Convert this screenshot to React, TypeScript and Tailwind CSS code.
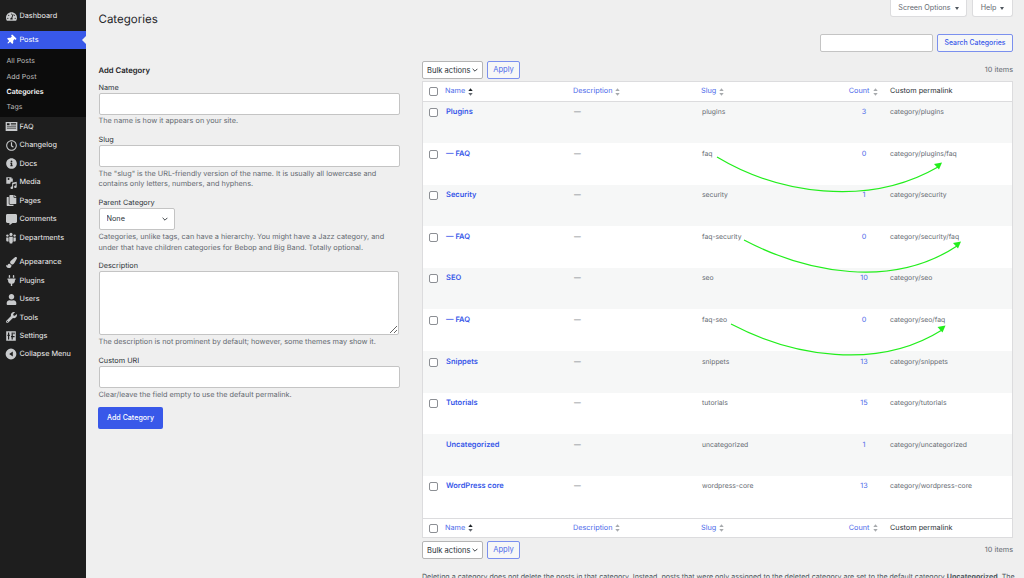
import type { ReactNode } from 'react';
import {
  FaTachometerAlt, FaThumbtack, FaRegClock, FaInfoCircle, FaCopy, FaCommentAlt,
  FaPaintBrush, FaPlug, FaUser, FaWrench,
} from 'react-icons/fa';

const font = { fontFamily: 'Inter, "Liberation Sans", sans-serif' };

function FaqIcon() {
  return (
    <svg viewBox="0 0 20 20" className="w-[13px] h-[13px]" fill="currentColor">
      <path d="M1 3h18v14H1z M3 5v3h4V5z M9 5v1h8V5z M9 7v1h8V7z M3 10v1h14v-1z M3 13v1h14v-1z" fillRule="evenodd" />
    </svg>
  );
}

function MediaIcon() {
  return (
    <svg viewBox="0 0 20 20" className="w-[13px] h-[13px]" fill="currentColor">
      <path d="M2 2h8v2h2v5H9l-1 3H2z M4 4.5a1.5 1.5 0 1 0 3 0a1.5 1.5 0 1 0-3 0z" fillRule="evenodd" />
      <path d="M18 9v7.5a2 2 0 1 1-1.5-1.9V11.5l-4 1v5.5a2 2 0 1 1-1.5-1.9V10.5z" />
    </svg>
  );
}

function GroupIcon() {
  return (
    <svg viewBox="0 0 20 20" className="w-[12px] h-[12px]" fill="currentColor">
      <circle cx="10" cy="4" r="2.6" />
      <circle cx="4" cy="6" r="2" />
      <circle cx="16" cy="6" r="2" />
      <path d="M7 8h6v8l-1 3H8l-1-3z" />
      <path d="M2 9h4v7H3l-1-2z" />
      <path d="M14 9h4v5l-1 2h-3z" />
    </svg>
  );
}

function SettingsIcon() {
  return (
    <svg viewBox="0 0 20 20" className="w-[12px] h-[12px]" fill="currentColor">
      <path d="M2 2h16v16H2z M5 4v4H4v2h1v6h2v-6h1V8H7V4z M11 4v6h-1v2h1v4h2v-4h3v-2h-3V4z M14 4v3h2V4z" fillRule="evenodd" />
    </svg>
  );
}

function CollapseIcon() {
  return (
    <svg viewBox="0 0 20 20" className="w-[12px] h-[12px]" fill="currentColor">
      <path d="M10 1a9 9 0 1 0 0 18a9 9 0 0 0 0-18z M13 6v8L7 10z" fillRule="evenodd" />
    </svg>
  );
}

function MenuItem({ icon, label, className = '' }: { icon: ReactNode; label: string; className?: string }) {
  return (
    <div className={`flex items-center h-[18.5px] pl-[3px] text-[#eeeeee] ${className}`}>
      <span className="w-[16.5px] flex justify-center text-[#c8cacc] text-[11px]">{icon}</span>
      <span className="pt-[1px]">{label}</span>
    </div>
  );
}

function Sidebar() {
  return (
    <aside className="w-[86px] shrink-0 h-full bg-[#1e1e1e] text-[7.3px] pt-[7px]">
      <MenuItem icon={<FaTachometerAlt />} label="Dashboard" />
      <div className="relative mt-[5.5px] flex items-center h-[18px] pl-[3px] bg-[#3858e9] text-white">
        <span className="w-[16.5px] flex justify-center text-[10px]"><FaThumbtack className="rotate-45" /></span>
        <span className="pt-[1px]">Posts</span>
        <span className="absolute right-0 top-[5px] w-0 h-0 border-y-[4px] border-y-transparent border-r-[4px] border-r-[#efefef]" />
      </div>
      <div className="bg-[#0c0c0c] h-[68px] pt-[5px] pl-[6.5px] text-[7px] text-[#bdbdbd]">
        <div className="h-[15.3px] flex items-center">All Posts</div>
        <div className="h-[15.3px] flex items-center">Add Post</div>
        <div className="h-[15.3px] flex items-center font-semibold text-white">Categories</div>
        <div className="h-[15.3px] flex items-center">Tags</div>
      </div>
      <div className="pt-[0.5px]">
        <MenuItem icon={<FaqIcon />} label="FAQ" />
        <MenuItem icon={<FaRegClock />} label="Changelog" />
        <MenuItem icon={<FaInfoCircle />} label="Docs" />
        <MenuItem icon={<MediaIcon />} label="Media" />
        <MenuItem icon={<FaCopy />} label="Pages" />
        <MenuItem icon={<FaCommentAlt />} label="Comments" />
        <MenuItem icon={<GroupIcon />} label="Departments" />
        <MenuItem icon={<FaPaintBrush />} label="Appearance" className="mt-[6px]" />
        <MenuItem icon={<FaPlug />} label="Plugins" />
        <MenuItem icon={<FaUser />} label="Users" />
        <MenuItem icon={<FaWrench />} label="Tools" />
        <MenuItem icon={<SettingsIcon />} label="Settings" />
        <MenuItem icon={<CollapseIcon />} label="Collapse Menu" className="-mt-[1px]" />
      </div>
    </aside>
  );
}

function Field({ label, help, children }: { label: string; help?: ReactNode; children: ReactNode }) {
  return (
    <div className="mb-[7px]">
      <div className="pt-[1px] text-[7.3px] leading-[10px] text-[#2c3338]">{label}</div>
      {children}
      {help && <p className="text-[7.3px] leading-[10.6px] text-[#646970] mt-[1.9px]">{help}</p>}
    </div>
  );
}

function TextInput() {
  return <input className="block w-[301px] h-[22px] bg-white border border-[#c4c4c4] rounded-[2px]" />;
}

function Chevron({ className }: { className: string }) {
  return (
    <svg viewBox="0 0 10 6" className={className} fill="none" stroke="#1d2327" strokeWidth="1.4">
      <path d="M1 1l4 4l4-4" />
    </svg>
  );
}

function AddForm() {
  return (
    <div className="w-[302px] shrink-0">
      <h1 className="text-[11.5px] leading-[16px] text-[#1d2327] mt-[11px]">Categories</h1>
      <h2 className="text-[7.7px] leading-[11px] font-semibold text-[#1d2327] mt-[37.5px] mb-[6px]">Add Category</h2>
      <Field label="Name" help="The name is how it appears on your site.">
        <TextInput />
      </Field>
      <Field
        label="Slug"
        help={'The "slug" is the URL-friendly version of the name. It is usually all lowercase and contains only letters, numbers, and hyphens.'}
      >
        <TextInput />
      </Field>
      <Field
        label="Parent Category"
        help="Categories, unlike tags, can have a hierarchy. You might have a Jazz category, and under that have children categories for Bebop and Big Band. Totally optional."
      >
        <div className="relative w-[76px] h-[22px]">
          <select className="block w-full h-full appearance-none bg-white border border-[#c4c4c4] rounded-[2px] pl-[7px] text-[7.3px] text-[#2c3338]">
            <option>None</option>
          </select>
          <Chevron className="absolute right-[7px] top-[9px] w-[6px] h-[4px]" />
        </div>
      </Field>
      <Field label="Description" help="The description is not prominent by default; however, some themes may show it.">
        <textarea className="block w-[300px] h-[64px] bg-white border border-[#c4c4c4] rounded-[2px]" />
      </Field>
      <Field label="Custom URI" help="Clear/leave the field empty to use the default permalink.">
        <TextInput />
      </Field>
      <button className="block w-[65px] h-[22px] -ml-[0.5px] bg-[#3858e9] rounded-[2px] text-white text-[7.1px] font-medium">Add Category</button>
    </div>
  );
}

function SortArrows({ active }: { active?: boolean }) {
  return (
    <svg viewBox="0 0 8 12" className="w-[5px] h-[8px] ml-[3px]">
      <path d="M4 0l3.5 4.5h-7z" fill={active ? '#1d2327' : '#a7aaad'} />
      <path d="M4 12l3.5-4.5h-7z" fill={active ? '#646970' : '#a7aaad'} />
    </svg>
  );
}

function Checkbox() {
  return <span className="block w-[9px] h-[9px] bg-white border border-[#8c8f94] rounded-[2px]" />;
}

function HeaderRow({ border }: { border: string }) {
  return (
    <div className={`flex items-center h-[19.5px] pt-[1px] bg-white ${border} text-[7.3px] text-[#4e6bea]`}>
      <span className="w-[22px] pl-[6px]"><Checkbox /></span>
      <span className="w-[128px] flex items-center">Name<SortArrows active /></span>
      <span className="w-[128px] flex items-center">Description<SortArrows /></span>
      <span className="w-[129px] flex items-center">Slug<SortArrows /></span>
      <span className="w-[60px] flex items-center justify-end pr-[12.5px]">Count<SortArrows /></span>
      <span className="text-[#2c3338]">Custom permalink</span>
    </div>
  );
}

const rows = [
  { name: 'Plugins', slug: 'plugins', count: '3', uri: 'category/plugins' },
  { name: '— FAQ', slug: 'faq', count: '0', uri: 'category/plugins/faq' },
  { name: 'Security', slug: 'security', count: '1', uri: 'category/security' },
  { name: '— FAQ', slug: 'faq-security', count: '0', uri: 'category/security/faq' },
  { name: 'SEO', slug: 'seo', count: '10', uri: 'category/seo' },
  { name: '— FAQ', slug: 'faq-seo', count: '0', uri: 'category/seo/faq' },
  { name: 'Snippets', slug: 'snippets', count: '13', uri: 'category/snippets' },
  { name: 'Tutorials', slug: 'tutorials', count: '15', uri: 'category/tutorials' },
  { name: 'Uncategorized', slug: 'uncategorized', count: '1', uri: 'category/uncategorized', locked: true },
  { name: 'WordPress core', slug: 'wordpress-core', count: '13', uri: 'category/wordpress-core' },
];

function Arrows() {
  return (
    <svg viewBox="1 1 591 457" className="absolute inset-0 w-[591px] h-[457px] pointer-events-none" fill="none">
      <g stroke="#22ee1c" strokeWidth="1.2">
        <path d="M295 76C355 112 445 127 516 86" />
        <path d="M322 159C385 192 470 208 535 165" />
        <path d="M309 243C370 275 455 290 520 249" />
      </g>
      <g fill="#22ee1c">
        <path d="M520 81.5l-8 1.5l5 5.5z" />
        <path d="M539 160.5l-8 1.5l5 5.5z" />
        <path d="M523.5 244.5l-8 1.5l5 5.5z" />
      </g>
    </svg>
  );
}

function CategoriesTable() {
  return (
    <div className="relative mt-[2px] w-[591px] h-[457px] border border-[#dcdcde] bg-white flex flex-col">
      <HeaderRow border="border-b border-[#dcdcde]" />
      <div className="flex-1 flex flex-col">
        {rows.map((r, i) => (
          <div key={r.uri} className={`flex-1 flex items-start pt-[4.5px] text-[6.8px] leading-[12px] text-[#646970] ${i % 2 === 0 ? 'bg-[#f6f7f7]' : 'bg-white'}`}>
            <span className="w-[23px] pl-[6px] pt-[2px]">{!r.locked && <Checkbox />}</span>
            <span className="w-[128px] text-[7.5px] font-semibold text-[#3858e9]">{r.name}</span>
            <span className="w-[128px]">—</span>
            <span className="w-[129px]">{r.slug}</span>
            <span className="w-[59px] pl-[7px] text-center text-[7.3px] text-[#4e6bea]">{r.count}</span>
            <span>{r.uri}</span>
          </div>
        ))}
      </div>
      <HeaderRow border="border-t border-[#dcdcde]" />
      <Arrows />
    </div>
  );
}

function BulkBar({ top }: { top: string }) {
  return (
    <div className={`flex items-center justify-between h-[18px] ${top}`}>
      <div className="flex gap-[4px]">
        <div className="relative w-[61px] h-[18px]">
          <select className="block w-full h-full appearance-none bg-white border border-[#b5b5b5] rounded-[2px] pl-[4px] pt-[1px] text-[7.6px] text-[#2c3338]">
            <option>Bulk actions</option>
          </select>
          <Chevron className="absolute right-[5px] top-[7px] w-[6px] h-[4px]" />
        </div>
        <button className="w-[33px] h-[18px] border border-[#7b90ee] rounded-[2px] bg-[#f6f7f7] text-[7.6px] text-[#4e6bea]">Apply</button>
      </div>
      <span className="text-[7.3px] text-[#646970]">10 items</span>
    </div>
  );
}

function ListColumn() {
  return (
    <div className="w-[591px] shrink-0 ml-[21.5px]">
      <div className="flex justify-end gap-[5px] h-[17px] text-[7.2px] text-[#646970]">
        <button className="w-[77px] h-[17px] pt-[1px] bg-white border border-t-0 border-[#dcdcde] rounded-b-[3px] flex items-center justify-center gap-[4px]">
          Screen Options <span className="w-0 h-0 border-x-[2.5px] border-x-transparent border-t-[3px] border-t-[#50575e]" />
        </button>
        <button className="w-[41px] h-[17px] pt-[1px] bg-white border border-t-0 border-[#dcdcde] rounded-b-[3px] flex items-center justify-center gap-[4px]">
          Help <span className="w-0 h-0 border-x-[2.5px] border-x-transparent border-t-[3px] border-t-[#50575e]" />
        </button>
      </div>
      <div className="flex justify-end gap-[4px] mt-[17px]">
        <input className="w-[113px] h-[18px] bg-white border border-[#c4c4c4] rounded-[2px]" />
        <button className="w-[76px] h-[18px] pt-[1px] border border-[#7b90ee] rounded-[2px] bg-[#f6f7f7] text-[6.9px] font-medium text-[#3858e9]">Search Categories</button>
      </div>
      <BulkBar top="mt-[9px]" />
      <CategoriesTable />
      <BulkBar top="mt-[3px]" />
      <p className="mt-[12px] text-[7.1px] leading-[11px] text-[#50575e] whitespace-nowrap">
        Deleting a category does not delete the posts in that category. Instead, posts that were only assigned to the deleted category are set to the default category <b>Uncategorized</b>. The
      </p>
    </div>
  );
}

export default function App() {
  return (
    <div className="flex w-[1024px] h-[578px] overflow-hidden bg-[#efefef] [text-rendering:geometricPrecision]" style={font}>
      <Sidebar />
      <main className="flex pl-[12.5px]">
        <AddForm />
        <ListColumn />
      </main>
    </div>
  );
}
